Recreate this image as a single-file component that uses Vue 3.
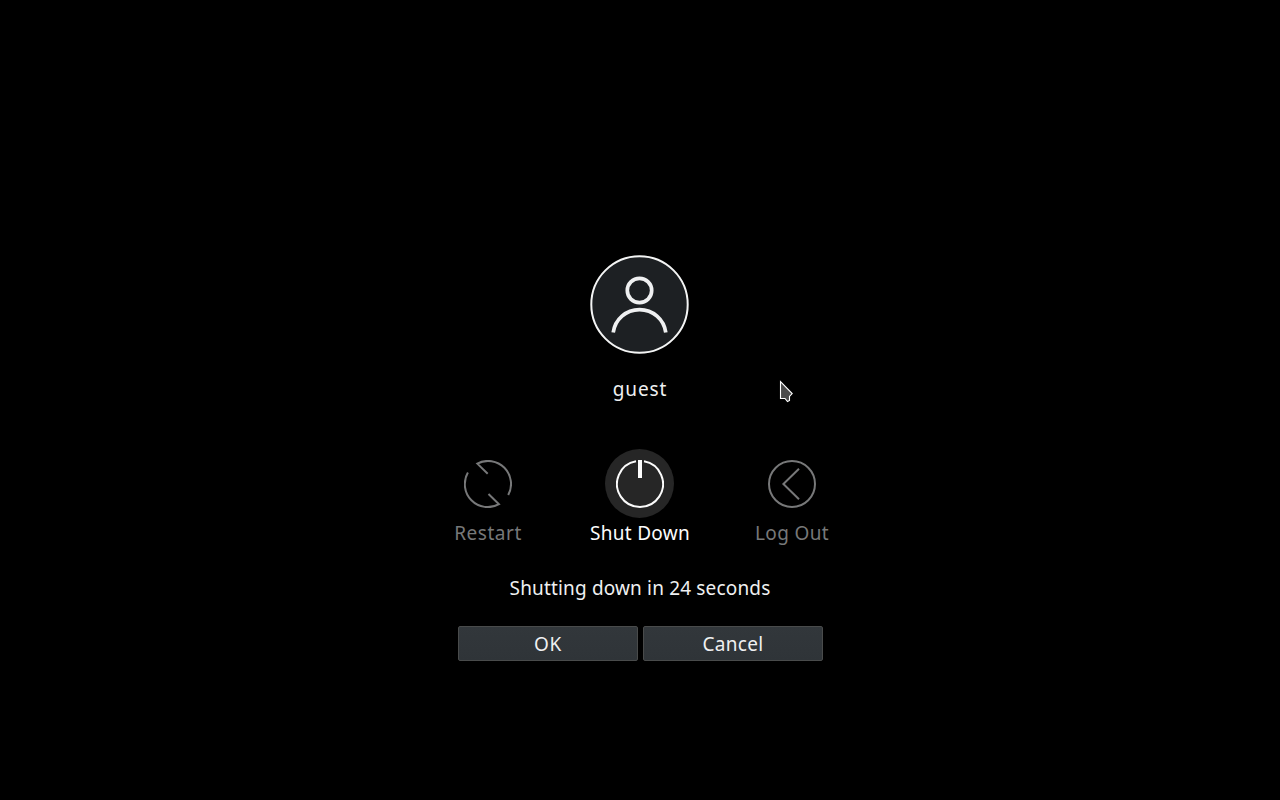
<script setup>
const actions = [
  { id: 'restart', label: 'Restart' },
  { id: 'shutdown', label: 'Shut Down', active: true },
  { id: 'logout', label: 'Log Out' },
]
</script>

<template>
  <main class="screen">
    <svg class="avatar" viewBox="0 0 100 100">
      <circle cx="49.5" cy="49.5" r="48.2" fill="#1d2023" stroke="#f4f5f5" stroke-width="2" />
      <g fill="none" stroke="#eff0f1" stroke-width="3.7">
        <circle cx="49.5" cy="35.5" r="12.2" />
        <path d="M23.2 77.6C25 64.3 36 54.7 49.5 54.7S74 64.3 75.8 77.6" />
      </g>
    </svg>
    <div class="user"><span>guest</span></div>

    <div class="actions">
      <div v-for="a in actions" :key="a.id" class="action" :class="[a.id, { active: a.active }]">
        <div class="disc">
          <svg viewBox="0 0 48 48" fill="none" stroke="currentColor" stroke-width="2">
            <template v-if="a.id === 'restart'">
              <path d="M23.7 13.7 13.3 3.6A23 23 0 0 1 44.2 35" />
              <path d="M24.5 34 35 44.2A23 23 0 0 1 3.9 12.6" />
            </template>
            <template v-else-if="a.id === 'shutdown'">
              <path d="M28 1.35A23 23 0 1 1 20 1.35" />
              <path d="M24 0V18" stroke-width="4" />
            </template>
            <template v-else>
              <circle cx="24" cy="24" r="23" />
              <path d="M31 8.8 15.4 24 31 39.2" />
            </template>
          </svg>
        </div>
        <span class="label">{{ a.label }}</span>
      </div>
    </div>

    <div class="countdown"><span>Shutting down in 24 seconds</span></div>
    <div class="buttons">
      <button class="ok"><span>OK</span></button>
      <button class="cancel"><span>Cancel</span></button>
    </div>

    <svg class="pointer" viewBox="0 0 15 23">
      <path d="M1.5 1.5V18.5H6L8.5 21.5 10.5 20.5V16.5L13.2 13.5Z" fill="#4b4b4b" stroke="#fff" stroke-width="1.1" />
    </svg>
  </main>
</template>

<style>
body { background: #000; }
</style>

<style scoped>
.screen {
  position: relative;
  box-sizing: border-box;
  width: 1280px;
  height: 800px;
  padding-top: 255px;
  overflow: hidden;
  display: flex;
  flex-direction: column;
  align-items: center;
  background: #000;
  color: #eff0f1;
  font: 19px/28px "Noto Sans", sans-serif;
  white-space: nowrap;
}
.avatar { width: 100px; height: 100px; flex: none; }
.user { margin-top: 20px; height: 28px; letter-spacing: 0.9px; }
.actions {
  display: grid;
  grid-template-columns: repeat(3, 152px);
  margin-top: 46px;
}
.action {
  display: flex;
  flex-direction: column;
  align-items: center;
  color: #777879;
}
.disc {
  box-sizing: border-box;
  width: 69px;
  height: 69px;
  margin-right: 1px;
  padding-left: 1px;
  display: flex;
  align-items: center;
  justify-content: center;
  border-radius: 50%;
}
.disc svg { width: 48px; height: 48px; }
.label { margin-top: 1px; }
.restart .label { letter-spacing: 0.55px; }
.shutdown .label { letter-spacing: 0.3px; }
.logout .label { letter-spacing: 0.35px; }
.active { color: #fcfcfc; }
.active .disc { background: #262626; }
.countdown { margin-top: 27px; height: 28px; letter-spacing: 0.16px; }
.buttons { display: flex; gap: 5px; margin: 24px 0 0 1px; }
button {
  box-sizing: border-box;
  width: 180px;
  height: 35px;
  padding: 0;
  border: 1px solid #494b4b;
  border-radius: 2px;
  background: linear-gradient(#32373b, #2f3438);
  color: inherit;
  font: inherit;
}
.ok { letter-spacing: 0.8px; }
.cancel { letter-spacing: 0.35px; }
.pointer {
  position: absolute;
  left: 779px;
  top: 380px;
  width: 15px;
  height: 23px;
}
</style>
